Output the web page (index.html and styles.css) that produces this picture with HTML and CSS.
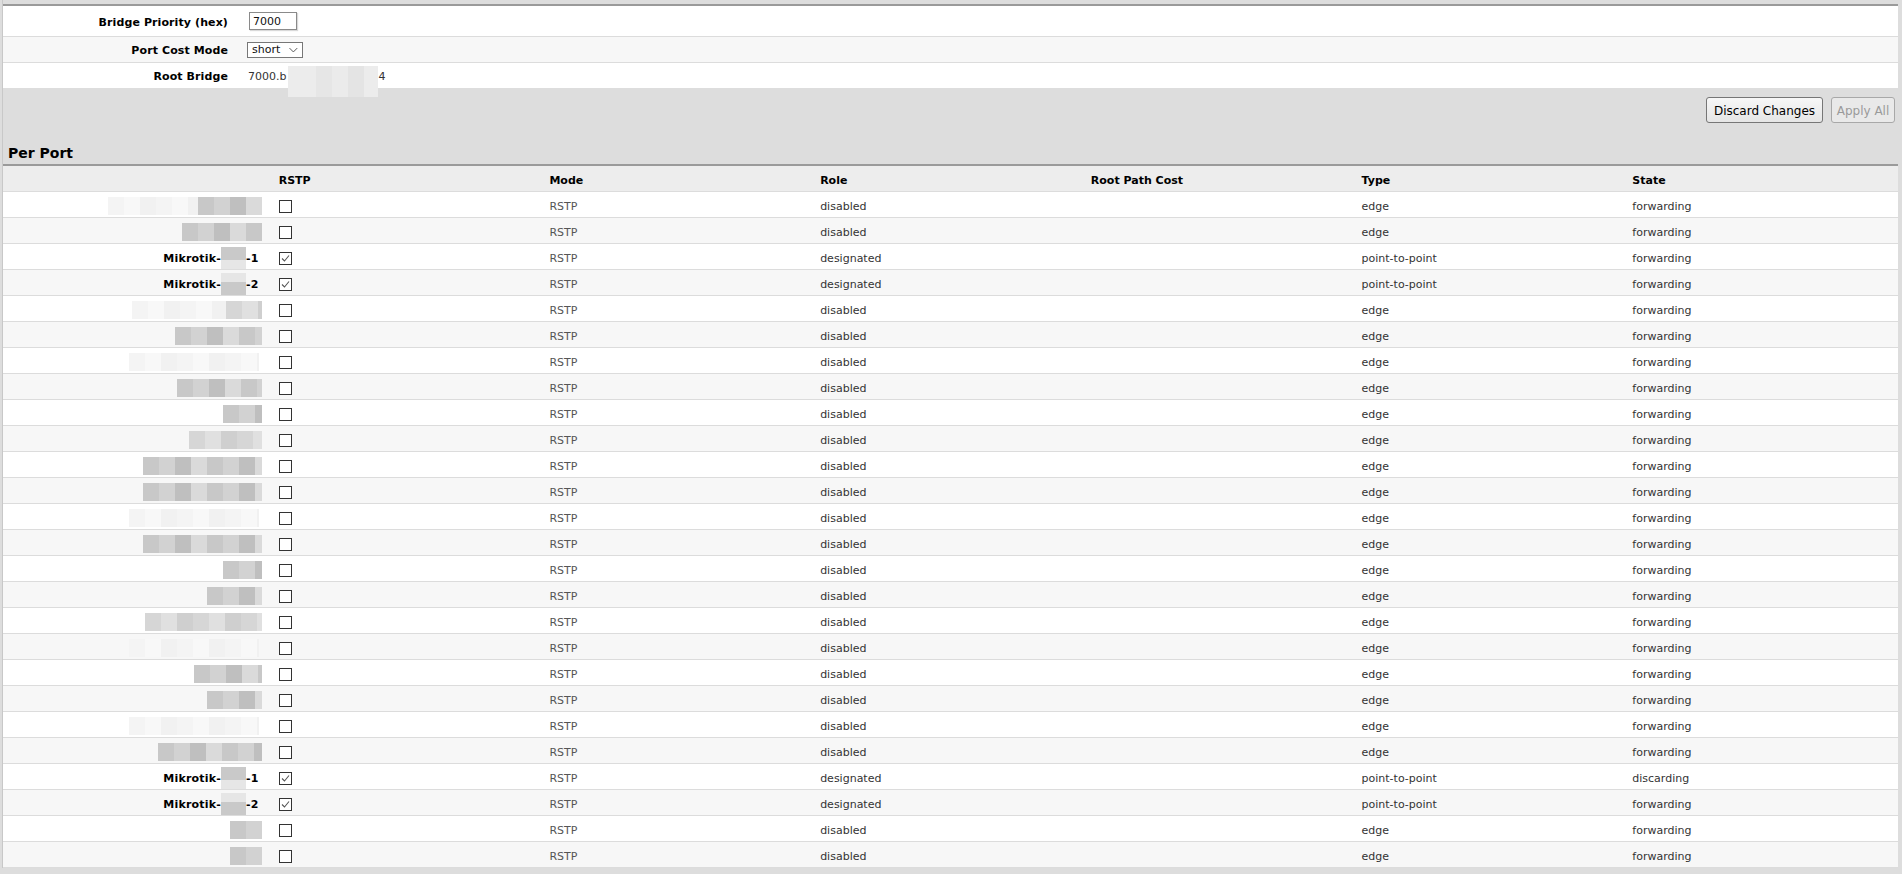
FILE: index.html
```html
<!DOCTYPE html>
<html lang="en">
<head>
  <meta charset="UTF-8" />
  <title>Bridge Settings</title>
  <link rel="stylesheet" href="styles.css">
</head>
<body>

<div class="page">

  <!-- Bridge settings -->
  <div class="settings">
    <div class="setting tall">
      <div class="setting-label">Bridge Priority (hex)</div>
      <div class="setting-value"><input type="text" class="text-input" value="7000" /></div>
    </div>
    <div class="setting">
      <div class="setting-label">Port Cost Mode</div>
      <div class="setting-value">
        <span class="select">short
          <svg width="9" height="6" viewBox="0 0 9 6"><polyline points="0.5,1 4.5,5 8.5,1" fill="none" stroke="#555" stroke-width="1"/></svg>
        </span>
      </div>
    </div>
    <div class="setting last">
      <div class="setting-label">Root Bridge</div>
      <div class="setting-value root">7000.b<span class="root-mask"></span>4</div>
    </div>
  </div>

  <div class="toolbar">
    <button class="btn btn-discard">Discard Changes</button>
    <button class="btn btn-apply" disabled>Apply All</button>
  </div>

  <h2 class="section-title">Per Port</h2>

  <!-- Per port table -->
  <div class="ports">
    <div class="port-row head">
      <div class="cell name"></div>
      <div class="cell">RSTP</div>
      <div class="cell">Mode</div>
      <div class="cell">Role</div>
      <div class="cell">Root Path Cost</div>
      <div class="cell">Type</div>
      <div class="cell">State</div>
    </div>

    <div class="port-row">
      <div class="cell name"><span class="mask lt" style="width:90px"></span><span class="mask" style="width:64px"></span></div>
      <div class="cell"><span class="cb"></span></div>
      <div class="cell mode">RSTP</div><div class="cell">disabled</div><div class="cell"></div><div class="cell">edge</div><div class="cell">forwarding</div>
    </div>
    <div class="port-row">
      <div class="cell name"><span class="mask" style="width:80px"></span></div>
      <div class="cell"><span class="cb"></span></div>
      <div class="cell mode">RSTP</div><div class="cell">disabled</div><div class="cell"></div><div class="cell">edge</div><div class="cell">forwarding</div>
    </div>
    <div class="port-row">
      <div class="cell name">Mikrotik-<span class="pmask"></span>-1</div>
      <div class="cell"><span class="cb on"><svg width="11" height="11" viewBox="0 0 11 11"><polyline points="2,5.5 4.5,8 9,2.5" fill="none" stroke="#555" stroke-width="1.1"/></svg></span></div>
      <div class="cell mode">RSTP</div><div class="cell">designated</div><div class="cell"></div><div class="cell">point-to-point</div><div class="cell">forwarding</div>
    </div>
    <div class="port-row">
      <div class="cell name">Mikrotik-<span class="pmask alt"></span>-2</div>
      <div class="cell"><span class="cb on"><svg width="11" height="11" viewBox="0 0 11 11"><polyline points="2,5.5 4.5,8 9,2.5" fill="none" stroke="#555" stroke-width="1.1"/></svg></span></div>
      <div class="cell mode">RSTP</div><div class="cell">designated</div><div class="cell"></div><div class="cell">point-to-point</div><div class="cell">forwarding</div>
    </div>
    <div class="port-row">
      <div class="cell name"><span class="mask lt" style="width:94px"></span><span class="mask soft" style="width:36px"></span></div>
      <div class="cell"><span class="cb"></span></div>
      <div class="cell mode">RSTP</div><div class="cell">disabled</div><div class="cell"></div><div class="cell">edge</div><div class="cell">forwarding</div>
    </div>
    <div class="port-row">
      <div class="cell name"><span class="mask" style="width:87px"></span></div>
      <div class="cell"><span class="cb"></span></div>
      <div class="cell mode">RSTP</div><div class="cell">disabled</div><div class="cell"></div><div class="cell">edge</div><div class="cell">forwarding</div>
    </div>
    <div class="port-row">
      <div class="cell name"><span class="mask lt" style="width:130px"></span></div>
      <div class="cell"><span class="cb"></span></div>
      <div class="cell mode">RSTP</div><div class="cell">disabled</div><div class="cell"></div><div class="cell">edge</div><div class="cell">forwarding</div>
    </div>
    <div class="port-row">
      <div class="cell name"><span class="mask" style="width:85px"></span></div>
      <div class="cell"><span class="cb"></span></div>
      <div class="cell mode">RSTP</div><div class="cell">disabled</div><div class="cell"></div><div class="cell">edge</div><div class="cell">forwarding</div>
    </div>
    <div class="port-row">
      <div class="cell name"><span class="mask" style="width:39px"></span></div>
      <div class="cell"><span class="cb"></span></div>
      <div class="cell mode">RSTP</div><div class="cell">disabled</div><div class="cell"></div><div class="cell">edge</div><div class="cell">forwarding</div>
    </div>
    <div class="port-row">
      <div class="cell name"><span class="mask soft" style="width:73px"></span></div>
      <div class="cell"><span class="cb"></span></div>
      <div class="cell mode">RSTP</div><div class="cell">disabled</div><div class="cell"></div><div class="cell">edge</div><div class="cell">forwarding</div>
    </div>
    <div class="port-row">
      <div class="cell name"><span class="mask" style="width:119px"></span></div>
      <div class="cell"><span class="cb"></span></div>
      <div class="cell mode">RSTP</div><div class="cell">disabled</div><div class="cell"></div><div class="cell">edge</div><div class="cell">forwarding</div>
    </div>
    <div class="port-row">
      <div class="cell name"><span class="mask" style="width:119px"></span></div>
      <div class="cell"><span class="cb"></span></div>
      <div class="cell mode">RSTP</div><div class="cell">disabled</div><div class="cell"></div><div class="cell">edge</div><div class="cell">forwarding</div>
    </div>
    <div class="port-row">
      <div class="cell name"><span class="mask lt" style="width:130px"></span></div>
      <div class="cell"><span class="cb"></span></div>
      <div class="cell mode">RSTP</div><div class="cell">disabled</div><div class="cell"></div><div class="cell">edge</div><div class="cell">forwarding</div>
    </div>
    <div class="port-row">
      <div class="cell name"><span class="mask" style="width:119px"></span></div>
      <div class="cell"><span class="cb"></span></div>
      <div class="cell mode">RSTP</div><div class="cell">disabled</div><div class="cell"></div><div class="cell">edge</div><div class="cell">forwarding</div>
    </div>
    <div class="port-row">
      <div class="cell name"><span class="mask" style="width:39px"></span></div>
      <div class="cell"><span class="cb"></span></div>
      <div class="cell mode">RSTP</div><div class="cell">disabled</div><div class="cell"></div><div class="cell">edge</div><div class="cell">forwarding</div>
    </div>
    <div class="port-row">
      <div class="cell name"><span class="mask" style="width:55px"></span></div>
      <div class="cell"><span class="cb"></span></div>
      <div class="cell mode">RSTP</div><div class="cell">disabled</div><div class="cell"></div><div class="cell">edge</div><div class="cell">forwarding</div>
    </div>
    <div class="port-row">
      <div class="cell name"><span class="mask soft" style="width:117px"></span></div>
      <div class="cell"><span class="cb"></span></div>
      <div class="cell mode">RSTP</div><div class="cell">disabled</div><div class="cell"></div><div class="cell">edge</div><div class="cell">forwarding</div>
    </div>
    <div class="port-row">
      <div class="cell name"><span class="mask lt" style="width:130px"></span></div>
      <div class="cell"><span class="cb"></span></div>
      <div class="cell mode">RSTP</div><div class="cell">disabled</div><div class="cell"></div><div class="cell">edge</div><div class="cell">forwarding</div>
    </div>
    <div class="port-row">
      <div class="cell name"><span class="mask" style="width:68px"></span></div>
      <div class="cell"><span class="cb"></span></div>
      <div class="cell mode">RSTP</div><div class="cell">disabled</div><div class="cell"></div><div class="cell">edge</div><div class="cell">forwarding</div>
    </div>
    <div class="port-row">
      <div class="cell name"><span class="mask" style="width:55px"></span></div>
      <div class="cell"><span class="cb"></span></div>
      <div class="cell mode">RSTP</div><div class="cell">disabled</div><div class="cell"></div><div class="cell">edge</div><div class="cell">forwarding</div>
    </div>
    <div class="port-row">
      <div class="cell name"><span class="mask lt" style="width:130px"></span></div>
      <div class="cell"><span class="cb"></span></div>
      <div class="cell mode">RSTP</div><div class="cell">disabled</div><div class="cell"></div><div class="cell">edge</div><div class="cell">forwarding</div>
    </div>
    <div class="port-row">
      <div class="cell name"><span class="mask" style="width:104px"></span></div>
      <div class="cell"><span class="cb"></span></div>
      <div class="cell mode">RSTP</div><div class="cell">disabled</div><div class="cell"></div><div class="cell">edge</div><div class="cell">forwarding</div>
    </div>
    <div class="port-row">
      <div class="cell name">Mikrotik-<span class="pmask"></span>-1</div>
      <div class="cell"><span class="cb on"><svg width="11" height="11" viewBox="0 0 11 11"><polyline points="2,5.5 4.5,8 9,2.5" fill="none" stroke="#555" stroke-width="1.1"/></svg></span></div>
      <div class="cell mode">RSTP</div><div class="cell">designated</div><div class="cell"></div><div class="cell">point-to-point</div><div class="cell">discarding</div>
    </div>
    <div class="port-row">
      <div class="cell name">Mikrotik-<span class="pmask alt"></span>-2</div>
      <div class="cell"><span class="cb on"><svg width="11" height="11" viewBox="0 0 11 11"><polyline points="2,5.5 4.5,8 9,2.5" fill="none" stroke="#555" stroke-width="1.1"/></svg></span></div>
      <div class="cell mode">RSTP</div><div class="cell">designated</div><div class="cell"></div><div class="cell">point-to-point</div><div class="cell">forwarding</div>
    </div>
    <div class="port-row">
      <div class="cell name"><span class="mask" style="width:32px"></span></div>
      <div class="cell"><span class="cb"></span></div>
      <div class="cell mode">RSTP</div><div class="cell">disabled</div><div class="cell"></div><div class="cell">edge</div><div class="cell">forwarding</div>
    </div>
    <div class="port-row">
      <div class="cell name"><span class="mask" style="width:32px"></span></div>
      <div class="cell"><span class="cb"></span></div>
      <div class="cell mode">RSTP</div><div class="cell">disabled</div><div class="cell"></div><div class="cell">edge</div><div class="cell">forwarding</div>
    </div>
  </div>

</div>

</body>
</html>
```

FILE: styles.css
```css
/* Reset */
* {
  margin: 0; padding: 0; box-sizing: border-box;
}

body {
  background: #dddddd;
  color: #333;
  font-family: 'DejaVu Sans', Verdana, sans-serif;
  font-size: 11px;
}

.page {
  margin: 0 4px 0 2px;
  padding-top: 4px;
  border-left: 1px solid #c8c8c8;
}

/* Bridge settings */
.settings {
  border-top: 2px solid #9a9a9a;
  background: #fff;
}

.setting {
  display: flex;
  align-items: center;
  height: 26px;
  border-bottom: 1px solid #dcdcdc;
}

.setting:nth-child(even) {
  background: #f7f7f7;
}

.setting.tall {
  height: 31px;
}

.setting.last {
  height: 25px;
  border-bottom: none;
}

.setting-label {
  width: 225px;
  padding-top: 2px;
  text-align: right;
  font-weight: bold;
  color: #000;
  letter-spacing: 0.1px;
}

.setting-value {
  margin-left: 21px;
}

.text-input {
  width: 48px;
  height: 18px;
  padding: 0 3px;
  border: 1px solid #8a8a8a;
  box-shadow: 1px 1px 1px rgba(0,0,0,0.15);
  font: 11px 'DejaVu Sans', Verdana, sans-serif;
  color: #111;
  outline: none;
}

.select {
  display: inline-flex;
  align-items: center;
  gap: 9px;
  width: 56px;
  height: 16px;
  margin-left: -2px;
  padding: 0 4px;
  border: 1px solid #777;
  background: #fff;
  color: #111;
}

.setting-value.root {
  display: flex;
  align-items: center;
  align-self: stretch;
  margin-left: 20px;
  padding-top: 2px;
}

.root-mask {
  align-self: flex-start;
  width: 90px;
  height: 31px;
  margin: 1px 0 -9px 2px;
  background: linear-gradient(90deg, #ececec 0 28px, #e6e6e6 28px 44px, #ebebeb 44px 60px, #e4e4e4 60px 76px, #ececec 76px);
}

/* Toolbar */
.toolbar {
  display: flex;
  justify-content: flex-end;
  gap: 8px;
  padding: 9px 3px 0 0;
}

.btn {
  height: 26px;
  padding-top: 1px;
  border: 1px solid #767676;
  border-radius: 3px;
  background: linear-gradient(#f7f7f7, #e5e5e5);
  font: 12px 'DejaVu Sans', Verdana, sans-serif;
  color: #000;
}

.btn-discard {
  width: 117px;
}

.btn-apply {
  width: 64px;
  color: #9a9a9a;
  border-color: #a8a8a8;
  background: #e9e9e9;
}

.section-title {
  margin: 21px 0 0 5px;
  padding: 1px 0 2px;
  font-size: 14px;
  line-height: 17px;
  color: #000;
}

/* Per port table */
.ports {
  border-top: 2px solid #9a9a9a;
}

.port-row {
  display: grid;
  grid-template-columns: repeat(7, 1fr);
  height: 26px;
  background: #fff;
  border-bottom: 1px solid #dcdcdc;
}

.port-row:nth-child(odd) {
  background: #f7f7f7;
}

.port-row.head {
  background: #ededed;
  font-weight: bold;
  color: #000;
}

.cell {
  display: flex;
  align-items: center;
  padding: 3px 5px 0;
  white-space: nowrap;
  overflow: visible;
}

.cell.name {
  justify-content: flex-end;
  padding-right: 15px;
  font-weight: bold;
  color: #000;
  letter-spacing: 0.2px;
}

.cell.mode {
  color: #555;
}

/* Redacted names */
.mask {
  display: inline-block;
  height: 18px;
  margin-right: -3px;
  background: repeating-linear-gradient(90deg, #c8c8c8 0 16px, #d2d2d2 16px 32px, #bfbfbf 32px 48px, #dadada 48px 64px);
}

.mask.soft {
  background: repeating-linear-gradient(90deg, #d6d6d6 0 16px, #e0e0e0 16px 32px, #cfcfcf 32px 48px);
}

.mask.lt {
  margin-right: 0;
  background: repeating-linear-gradient(90deg, #f4f4f4 0 16px, #f8f8f8 16px 32px, #f1f1f1 32px 48px);
}

.pmask {
  display: inline-block;
  width: 25px;
  height: 22px;
  background: linear-gradient(#c9c9c9 0 60%, #e6e6e6 60%);
}

.pmask.alt {
  background: linear-gradient(#e6e6e6 0 40%, #c9c9c9 40%);
}

/* Checkbox */
.cb {
  display: inline-flex;
  width: 13px;
  height: 13px;
  border: 1px solid #333;
  background: #fff;
}
```
